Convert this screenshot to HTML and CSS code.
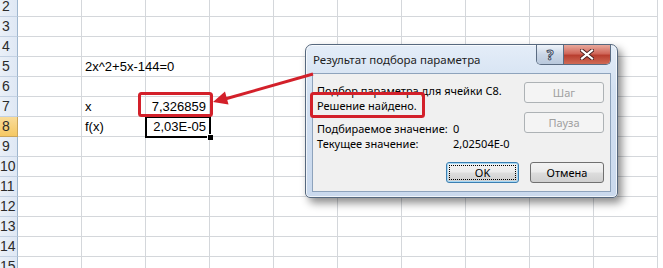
FILE: index.html
```html
<!DOCTYPE html>
<html lang="ru">
<head>
<meta charset="UTF-8">
<meta name="viewport" content="width=device-width, initial-scale=1.0">
<title>Подбор параметра</title>
<link rel="stylesheet" href="styles.css">
</head>
<body>
    <div class="sheet">
        <div class="row"><div class="rh">2</div><div></div><div></div><div></div><div></div><div></div><div></div><div></div><div></div><div></div><div></div></div>
        <div class="row"><div class="rh">3</div><div></div><div></div><div></div><div></div><div></div><div></div><div></div><div></div><div></div><div></div></div>
        <div class="row"><div class="rh">4</div><div></div><div></div><div></div><div></div><div></div><div></div><div></div><div></div><div></div><div></div></div>
        <div class="row"><div class="rh">5</div><div></div><div class="txt">2x^2+5x-144=0</div><div></div><div></div><div></div><div></div><div></div><div></div><div></div><div></div></div>
        <div class="row"><div class="rh">6</div><div></div><div></div><div></div><div></div><div></div><div></div><div></div><div></div><div></div><div></div></div>
        <div class="row"><div class="rh">7</div><div></div><div>x</div><div class="num">7,326859</div><div></div><div></div><div></div><div></div><div></div><div></div><div></div></div>
        <div class="row"><div class="rh on">8</div><div></div><div>f(x)</div><div class="num sel">2,03E-05</div><div></div><div></div><div></div><div></div><div></div><div></div><div></div></div>
        <div class="row"><div class="rh">9</div><div></div><div></div><div></div><div></div><div></div><div></div><div></div><div></div><div></div><div></div></div>
        <div class="row"><div class="rh">10</div><div></div><div></div><div></div><div></div><div></div><div></div><div></div><div></div><div></div><div></div></div>
        <div class="row"><div class="rh">11</div><div></div><div></div><div></div><div></div><div></div><div></div><div></div><div></div><div></div><div></div></div>
        <div class="row"><div class="rh">12</div><div></div><div></div><div></div><div></div><div></div><div></div><div></div><div></div><div></div><div></div></div>
        <div class="row"><div class="rh">13</div><div></div><div></div><div></div><div></div><div></div><div></div><div></div><div></div><div></div><div></div></div>
        <div class="row"><div class="rh">14</div><div></div><div></div><div></div><div></div><div></div><div></div><div></div><div></div><div></div><div></div></div>
        <div class="row"><div class="rh">15</div><div></div><div></div><div></div><div></div><div></div><div></div><div></div><div></div><div></div><div></div></div>
    </div>

    <div class="dialog">
        <div class="titlebar">
            <span class="title">Результат подбора параметра</span>
            <div class="caption-btns">
                <span class="help">?</span>
                <span class="close">
                    <svg width="14" height="11" viewBox="0 0 14 11">
                        <path d="M2 1.5 L12 9.5 M12 1.5 L2 9.5" stroke="#4a2020" stroke-width="4" stroke-linecap="square"/>
                        <path d="M2 1.5 L12 9.5 M12 1.5 L2 9.5" stroke="#fff" stroke-width="2.2" stroke-linecap="square"/>
                    </svg>
                </span>
            </div>
        </div>
        <div class="client">
            <div class="main">
                <div class="info">
                    <div>Подбор параметра для ячейки C8.</div>
                    <div>Решение найдено.</div>
                    <div class="pair"><span>Подбираемое значение:</span><span>0</span></div>
                    <div class="pair"><span>Текущее значение:</span><span>2,02504E-0</span></div>
                </div>
                <div class="side">
                    <button class="btn" disabled>Шаг</button>
                    <button class="btn" disabled>Пауза</button>
                </div>
            </div>
            <div class="foot">
                <button class="btn ok">OK</button>
                <button class="btn">Отмена</button>
            </div>
        </div>
    </div>

    <svg class="marks" width="663" height="268" viewBox="0 0 663 268">
        <rect x="139.5" y="93.5" width="72" height="22" rx="2" fill="none" stroke="#d3202a" stroke-width="3"/>
        <rect x="311.5" y="93.5" width="112" height="23" rx="2" fill="none" stroke="#d3202a" stroke-width="3"/>
        <line x1="313" y1="74" x2="225" y2="99" stroke="#d3202a" stroke-width="3"/>
        <polygon points="213,102 228.5,104.5 225,91.5" fill="#d3202a"/>
    </svg>
</body>
</html>
```

FILE: styles.css
```css
body {
    margin: 0;
    width: 663px;
    height: 268px;
    overflow: hidden;
    position: relative;
    background: #fff;
    font-family: "Liberation Sans", Arial, sans-serif;
}
.sheet {
    margin-top: -3px;
    font-size: 13px;
    color: #000;
}
.row {
    display: grid;
    grid-template-columns: 18px repeat(10, 64px);
    height: 20px;
}
.row > div {
    box-sizing: border-box;
    border-right: 1px solid #d4d7db;
    border-bottom: 1px solid #d4d7db;
    padding: 0 3px;
    line-height: 19px;
    white-space: nowrap;
}
.row > .rh {
    background: linear-gradient(to right, #eaf0f8, #dfe8f4);
    border-right-color: #9eb6ce;
    border-bottom-color: #c3d1e2;
    color: #2b2b2b;
    padding: 0 5px 0 0;
    text-align: center;
    font-size: 14px;
    overflow: hidden;
}
.row > .rh.on {
    background: linear-gradient(#f9dc9a, #f5c863);
    border-bottom-color: #c9a55c;
    border-right-color: #c9a55c;
}
.txt {
    overflow: visible;
}
.num {
    text-align: right;
}
.sel {
    position: relative;
}
.sel::before {
    content: '';
    position: absolute;
    left: -1px;
    top: -1px;
    right: -2px;
    bottom: -2px;
    border: 2px solid #000;
}
.sel::after {
    content: '';
    position: absolute;
    right: -4px;
    bottom: -4px;
    width: 5px;
    height: 5px;
    background: #000;
    border: 1px solid #fff;
    border-width: 1px 0 0 1px;
}

.dialog {
    position: absolute;
    left: 305px;
    top: 44px;
    width: 313px;
    box-sizing: border-box;
    border: 1px solid #56687e;
    border-radius: 7px 7px 5px 5px;
    background: linear-gradient(#e4edf8, #d2e0f1 30%, #cad9ed);
    padding: 0 6px 5px;
    box-shadow: 4px 5px 9px rgba(0, 0, 0, 0.45), inset 0 0 0 1px rgba(255, 255, 255, 0.7);
    font-family: "Noto Sans", "Open Sans", sans-serif;
    font-size: 11px;
    color: #000;
    z-index: 2;
}
.titlebar {
    display: flex;
    align-items: center;
    height: 28px;
}
.title {
    margin-left: 1px;
    font-size: 11.5px;
    color: #1e1e1e;
}
.caption-btns {
    margin-left: auto;
    align-self: flex-start;
    display: flex;
    height: 19px;
    border: 1px solid #5b6c82;
    border-top: none;
    border-radius: 0 0 5px 5px;
    overflow: hidden;
}
.help {
    width: 26px;
    background: linear-gradient(#eef3f9, #cad6e6 50%, #b9c8dc);
    border-right: 1px solid #5b6c82;
    text-align: center;
    font-weight: bold;
    font-size: 14px;
    line-height: 19px;
    color: #fff;
    -webkit-text-stroke: 1px #3d4b60;
}
.close {
    width: 46px;
    display: flex;
    align-items: center;
    justify-content: center;
    background: linear-gradient(#e9a99c, #d0675a 45%, #b93f30 55%, #cf6a55);
}
.client {
    border: 1px solid #8ea3bc;
    background: #f0f0f0;
    padding: 8px 6px 8px 4px;
}
.main {
    display: flex;
}
.info {
    flex: 1;
    margin-top: 1px;
    line-height: 15px;
}
.pair {
    display: flex;
}
.pair span:first-child {
    width: 136px;
}
.info .pair:nth-child(3) {
    margin-top: 8px;
}
.side {
    display: flex;
    flex-direction: column;
    gap: 9px;
}
.btn {
    width: 80px;
    height: 21px;
    box-sizing: border-box;
    border: 1px solid #707070;
    border-radius: 3px;
    background: linear-gradient(#f3f3f3, #ebebeb 48%, #dddddd 52%, #cfcfcf);
    font-family: inherit;
    font-size: 11px;
    color: #000;
    padding: 0;
}
.btn:disabled {
    border-color: #adb2b5;
    background: #f4f4f4;
    color: #a0a0a0;
}
.foot {
    display: flex;
    justify-content: flex-end;
    gap: 11px;
    margin-top: 11px;
}
.foot .btn {
    width: 74px;
}
.foot .ok {
    width: 73px;
    border-color: #3c7fb1;
    box-shadow: inset 0 0 0 1px #a6d8f5;
    outline: 1px dotted #000;
    outline-offset: -4px;
}
.marks {
    position: absolute;
    left: 0;
    top: 0;
    z-index: 3;
    pointer-events: none;
}
```
